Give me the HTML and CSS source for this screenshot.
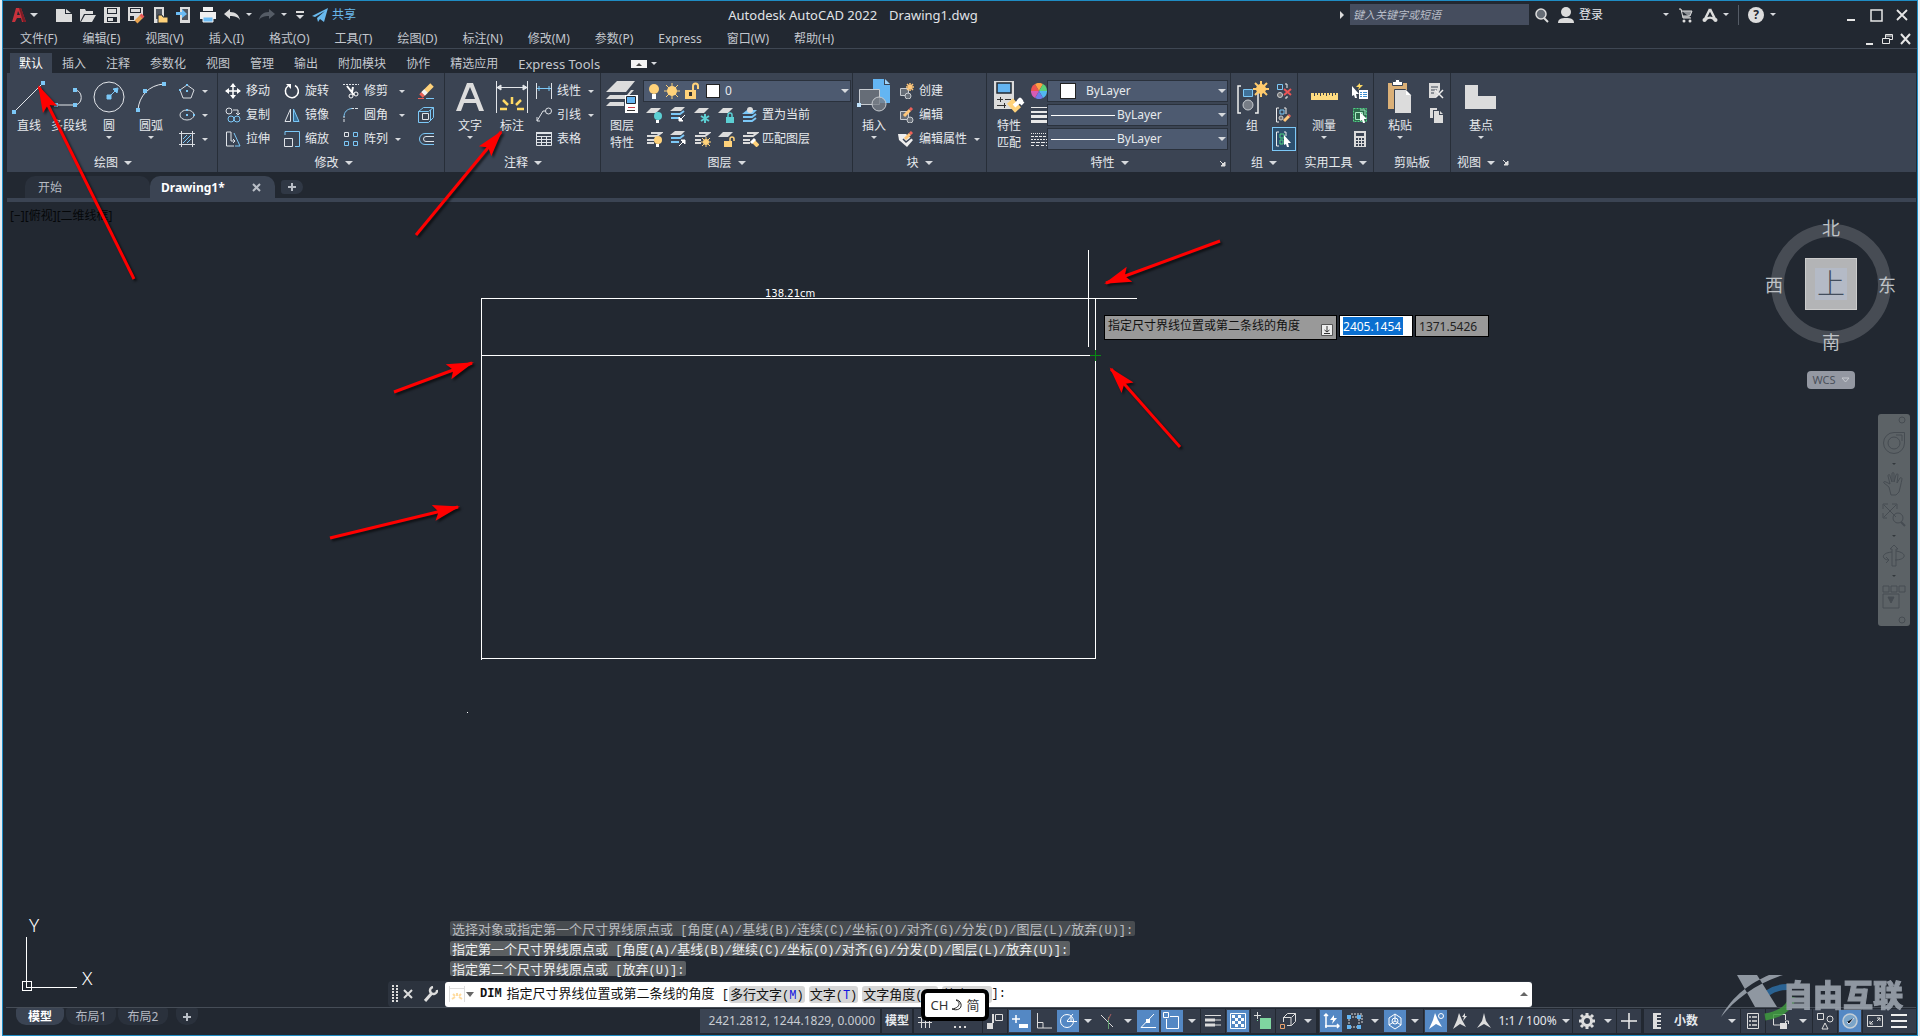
FILE: index.html
```html
<!DOCTYPE html>
<html lang="zh-CN">
<head>
<meta charset="utf-8">
<title>Autodesk AutoCAD 2022 - Drawing1.dwg</title>
<link rel="stylesheet" href="styles.css">
</head>
<body>
<div class="app">
  <header class="titlebar">
    <div class="quick">
      <button class="logo" aria-label="AutoCAD"><svg width="14" height="16" viewBox="0 0 14 16"><path fill="#c8323c" fill-rule="evenodd" d="M4 1h5l5 14h-4l-1-4H5l-2 4H0zM6 4l-1 4h3z"/><path fill="#7d1c26" d="M9 1l5 14h-3L7 1z"/></svg></button>
      <span class="caret wide"></span>
      <button class="q" aria-label="新建"><svg width="18" height="18"><path fill="#dcdcdc" d="M1 3h9v5h7v8H1z"/><path fill="#dcdcdc" d="M11 3l5 4h-5z"/></svg></button>
      <button class="q" aria-label="打开"><svg width="18" height="18"><path fill="#dcdcdc" d="M1 16V3h5l1 2h7v3H5zM6 9h11l-4 7H2z"/></svg></button>
      <button class="q" aria-label="保存"><svg width="18" height="18"><path fill="#dcdcdc" fill-rule="evenodd" d="M1 1h16v16H1zM4 2v6h10V2zM4 11v5h10v-5z"/><path fill="#dcdcdc" d="M5 3h8v4H5zM5 12h5v3H5z"/></svg></button>
      <button class="q" aria-label="另存为"><svg width="18" height="18"><path fill="#dcdcdc" fill-rule="evenodd" d="M1 1h15v8l-6 6H1zM3 2v5h11V2zM3 10v4h4v-4z"/><path fill="#dcdcdc" d="M4 3h9v3H4z"/><path stroke="#e7a24f" stroke-width="4" d="M9 16l6-6"/><path stroke="#e95959" stroke-width="4" d="M14 11l2-2"/></svg></button>
      <button class="q" aria-label="从移动设备打开"><svg width="18" height="18"><path fill="#dcdcdc" d="M3 1h10v16H3z"/><path fill="#50565f" d="M5 3h6v10H5z"/><path fill="#ffd27a" stroke="#222831" d="M7 17v-8h4l1 2h5v6z"/></svg></button>
      <button class="q" aria-label="保存到移动设备"><svg width="18" height="18"><path fill="#dcdcdc" d="M5 1h10v16H5z"/><path fill="#50565f" d="M7 3h6v11H7z"/><path fill="#6bbcf5" d="M1 6h6V3l5 5-5 4V9H1z"/></svg></button>
      <button class="q" aria-label="打印"><svg width="18" height="18"><path fill="#f0f0f0" d="M4 1h10v4H4zM1 6h16v7H1z"/><path fill="#6bbcf5" stroke="#f0f0f0" d="M4 11h10v5H4z"/></svg></button>
      <button class="q" aria-label="放弃"><svg width="18" height="18"><path fill="#dcdcdc" d="M1 8l6-5v3c6 0 9 3 10 8-2-3-5-4-10-4v3z"/></svg></button>
      <span class="caret tight"></span>
      <button class="q r" aria-label="重做"><svg width="18" height="18"><path fill="#555c66" d="M17 8l-6-5v3C5 6 2 9 1 14c2-3 5-4 10-4v3z"/></svg></button>
      <span class="caret tight"></span>
      <button class="custom" aria-label="自定义"><i></i><span class="caret wide"></span></button>
      <a class="share" href="#"><svg width="16" height="16"><path fill="#69b9ee" d="M0 9L16 1 12 15 8 12 6 15 5 11 13 4 3 10z"/></svg>共享</a>
    </div>
    <div class="apptitle"><span>Autodesk AutoCAD 2022</span><span>Drawing1.dwg</span></div>
    <div class="account">
      <svg width="6" height="10"><path fill="#ddd" d="M1 1l4 4-4 4z"/></svg>
      <input class="search" type="text" placeholder="键入关键字或短语" aria-label="搜索">
      <button class="mag" aria-label="查找"><svg width="16" height="16"><circle cx="7" cy="7" r="5" fill="#666d76" stroke="#ddd" stroke-width="1.5"/><path stroke="#ddd" stroke-width="2" d="M10 11l4 4"/></svg></button>
      <button class="login"><svg width="16" height="18"><circle cx="8" cy="6" r="5" fill="#dcdcdc"/><path fill="#dcdcdc" d="M0 17c0-4 3-5 8-5s8 1 8 5z"/></svg>登录</button>
      <span class="caret"></span>
      <button class="cart" aria-label="购物车"><svg width="16" height="16"><path d="M1 2h2l2 9h8M3 4h11l-2 5H5" stroke="#dcdcdc" fill="#8b8f94"/><circle cx="6" cy="14" r="1.5" fill="#ddd"/><circle cx="12" cy="14" r="1.5" fill="#ddd"/></svg></button>
      <button class="apps" aria-label="应用"><svg width="16" height="16"><path d="M8 2L2.500 13M8 2l5.500 11M3 13c3-3 7-3 10 0" fill="none" stroke="#dcdcdc" stroke-width="2.5"/><circle cx="2.500" cy="13" r="2" fill="#dcdcdc"/><circle cx="13.500" cy="13" r="2" fill="#dcdcdc"/></svg></button>
      <span class="caret"></span>
      <i class="vline"></i>
      <button class="help" aria-label="帮助">?</button>
      <span class="caret"></span>
      <div class="win">
        <button aria-label="最小化"><svg width="12" height="14"><path stroke="#e6e6e6" stroke-width="2" d="M2 12h8"/></svg></button>
        <button aria-label="最大化"><svg width="14" height="14"><path stroke="#e6e6e6" fill="none" stroke-width="1.5" d="M2 2h11v11H2z"/></svg></button>
        <button aria-label="关闭"><svg width="14" height="14"><path stroke="#e6e6e6" stroke-width="1.8" d="M2 2l10 10M12 2L2 12"/></svg></button>
      </div>
    </div>
  </header>

  <nav class="menubar">
    <button>文件(F)</button><button>编辑(E)</button><button>视图(V)</button><button>插入(I)</button><button>格式(O)</button><button>工具(T)</button><button>绘图(D)</button><button>标注(N)</button><button>修改(M)</button><button>参数(P)</button><button>Express</button><button>窗口(W)</button><button>帮助(H)</button>
    <div class="docwin">
      <button aria-label="最小化图形"><svg width="12" height="14"><path stroke="#e6e6e6" stroke-width="2" d="M3 12h7"/></svg></button>
      <button aria-label="还原图形"><svg width="12" height="12"><path stroke="#e6e6e6" fill="none" d="M1.500 5.500h7v5h-7zM4.500 5V1.500h7v5H9M4 3h7"/></svg></button>
      <button aria-label="关闭图形"><svg width="12" height="12"><path stroke="#e6e6e6" stroke-width="2" d="M2 1l9 10M11 1L2 11"/></svg></button>
    </div>
  </nav>

  <nav class="tabs">
    <button class="on">默认</button><button>插入</button><button>注释</button><button>参数化</button><button>视图</button><button>管理</button><button>输出</button><button>附加模块</button><button>协作</button><button>精选应用</button><button class="lat">Express Tools</button>
    <button class="collapse" aria-label="最小化功能区"><i></i></button><span class="caret"></span>
  </nav>

  <div class="ribbon">
    <section class="panel draw">
      <div class="body">
        <button class="big w40"><svg width="34" height="36"><path stroke="#e3e6ea" d="M2 33L31 4"/><path fill="#7cc8f7" d="M0 31h4v4H0zM29 2h4v4h-4z"/></svg>直线</button>
        <button class="big w40"><svg width="34" height="36"><path stroke="#e3e6ea" fill="none" d="M4 26h20a8 8 0 0 0 0-15"/><path fill="#7cc8f7" d="M2 24h4v4H2zM21 24h4v4h-4zM21 9h4v4h-4z"/></svg>多段线</button>
        <button class="big w40"><svg width="34" height="36"><circle cx="17" cy="18" r="15" fill="none" stroke="#e3e6ea"/><path stroke="#7cc8f7" fill="#7cc8f7" d="M17 18l8-8M26 9l-5 1 4 4zM15 16h4v4h-4z"/></svg>圆<span class="caret"></span></button>
        <button class="big w44"><svg width="34" height="36"><path stroke="#e3e6ea" fill="none" d="M4 31C5 17 15 6 30 5"/><path fill="#7cc8f7" d="M2 29h4v4H2zM9 10h4v4H9zM28 3h4v4h-4z"/></svg>圆弧<span class="caret"></span></button>
        <div class="col icons">
          <button class="row" aria-label="多边形"><svg width="16" height="16"><path stroke="#d9dde2" fill="none" d="M8 2l7 5-3 8H4L1 7z"/><path fill="#7cc8f7" d="M7 7h2v2H7zM7 1h2v2H7zM0 6h2v2H0z"/></svg><span class="caret"></span></button>
          <button class="row" aria-label="椭圆"><svg width="16" height="16"><ellipse cx="8" cy="8" rx="7" ry="5" stroke="#d9dde2" fill="none"/><path fill="#7cc8f7" d="M7 7h2v2H7zM14 7h2v2h-2zM7 2h2v2H7z"/></svg><span class="caret"></span></button>
          <button class="row" aria-label="图案填充"><svg width="16" height="16"><path stroke="#d9dde2" fill="none" d="M2.500 0v16M13.500 0v16M0 2.500h16M0 13.500h16"/><path stroke="#7cc8f7" d="M4 8l4-4M4 12l8-8M8 12l4-4"/></svg><span class="caret"></span></button>
        </div>
      </div>
      <h2>绘图<span class="caret wide"></span></h2>
    </section>

    <section class="panel modify">
      <div class="body">
        <div class="col w59">
          <button class="row"><svg width="16" height="16"><path stroke="#fff" stroke-width="1.500" d="M8 1v14M1 8h14"/><path fill="#fff" d="M8 0l3 4H5zM8 16l3-4H5zM0 8l4-3v6zM16 8l-4-3v6z"/></svg>移动</button>
          <button class="row"><svg width="16" height="16"><g fill="none" stroke="#dfe3e8"><circle cx="4" cy="4" r="3"/><path d="M8 3h5v5M11 6l2 2 2-2"/></g><g fill="none" stroke="#7cc8f7"><circle cx="6" cy="12" r="3"/><circle cx="12" cy="12" r="3"/></g></svg>复制</button>
          <button class="row"><svg width="16" height="16"><path stroke="#dfe3e8" fill="none" d="M9 15H1.500V1H6v9h4M8 8l2 2-2 2"/><path stroke="#7cc8f7" fill="none" d="M9 2l6 13h-5"/></svg>拉伸</button>
        </div>
        <div class="col w59">
          <button class="row"><svg width="16" height="16"><path stroke="#fff" stroke-width="1.500" fill="none" d="M11 2.500A6.500 6.500 0 1 1 4 3"/><path fill="#fff" d="M2 1h5v5z"/></svg>旋转</button>
          <button class="row"><svg width="16" height="16"><path stroke="#dfe3e8" fill="none" d="M6.500 2v12.500H1z"/><path stroke="#7cc8f7" fill="#38729c" d="M9.500 2v12.500H15z"/></svg>镜像</button>
          <button class="row"><svg width="16" height="16"><path stroke="#7cc8f7" fill="none" d="M1 4V.5h14.500v15H11"/><path stroke="#dfe3e8" fill="none" d="M.5 7.500h8v8h-8z"/></svg>缩放</button>
        </div>
        <div class="col w75">
          <button class="row"><svg width="16" height="16"><path stroke="#dfe3e8" stroke-dasharray="2 1" d="M0 1.500h16"/><path stroke="#fff" stroke-width="2" d="M4 3l7 9M10 4L9 9"/><g fill="none" stroke="#fff"><circle cx="8" cy="13" r="2"/><circle cx="13" cy="11" r="2"/></g></svg>修剪<span class="caret far"></span></button>
          <button class="row"><svg width="16" height="16"><path stroke="#dfe3e8" stroke-dasharray="3 1" fill="none" d="M1 15V9M8 1.500h8"/><path stroke="#7cc8f7" fill="none" d="M1 10c0-5 3-8 8-8.500"/></svg>圆角<span class="caret far"></span></button>
          <button class="row"><svg width="16" height="16"><path stroke="#dfe3e8" fill="none" d="M1.500 1.500h4v4h-4z"/><path stroke="#7cc8f7" fill="none" d="M10.500 1.500h4v4h-4zM1.500 10.500h4v4h-4zM10.500 10.500h4v4h-4z"/></svg>阵列<span class="caret"></span></button>
        </div>
        <div class="col">
          <button class="row" aria-label="删除"><svg width="16" height="16"><path stroke="#ffd27a" stroke-width="5" d="M5 11l9-9"/><path stroke="#f3f3f3" stroke-width="5" d="M5 11l3-3"/><path stroke="#ee6058" stroke-width="5" d="M3 13l2-2"/><path stroke="#7cc8f7" d="M8 15.500h8"/><path stroke="#ee6058" d="M0 15.500h6"/></svg></button>
          <button class="row" aria-label="分解"><svg width="16" height="16"><path stroke="#dfe3e8" fill="none" d="M4.500 6.500h6v6h-6z"/><path stroke="#7cc8f7" fill="none" d="M.5 4.500v11h10M.5 4.500h10M.5 4.500l5-4h10v10l-5 5M10.500 4.500l5-4M12.500 3v10"/></svg></button>
          <button class="row" aria-label="偏移"><svg width="16" height="16"><path stroke="#7cc8f7" fill="none" d="M16 2.500H7a5.500 5.500 0 0 0 0 11h9"/><path stroke="#dfe3e8" fill="none" d="M16 5.500H8a2.500 2.500 0 0 0 0 5h8"/></svg></button>
        </div>
      </div>
      <h2>修改<span class="caret wide"></span></h2>
    </section>

    <section class="panel annot">
      <div class="body">
        <button class="big w48"><svg width="34" height="36"><path fill="#dcdcdc" fill-rule="evenodd" d="M14 4h6l11 28h-5l-3-8H11l-3 8H3zM17 8l-5 12h10z"/></svg>文字<span class="caret"></span></button>
        <button class="big w36"><svg width="34" height="36"><path stroke="#e3e6ea" fill="#e3e6ea" d="M1.500 2v32M32.500 2v32M2 8.500h30M6 6v5l-4-2.500zM28 6v5l4-2.500z"/><path stroke="#ffd964" stroke-width="2.500" d="M5 30h7M8 21l5 5M17 18v7M26 21l-5 5M29 30h-7"/></svg>标注</button>
        <div class="col w66 gap4">
          <button class="row"><svg width="16" height="16"><path stroke="#dfe3e8" d="M.5 0v16M15.500 0v16"/><path stroke="#7cc8f7" d="M1 5.500h14M3 3v5M13 3v5"/></svg>线性<span class="caret"></span></button>
          <button class="row"><svg width="16" height="16"><circle cx="12.500" cy="4" r="3" fill="none" stroke="#dfe3e8"/><path stroke="#dfe3e8" fill="none" d="M9.500 4H7L1 14M1 10v4h3"/></svg>引线<span class="caret"></span></button>
          <button class="row"><svg width="16" height="16"><path stroke="#dfe3e8" fill="none" d="M.5 1.500h15v13H.5zM0 5.500h16M0 8.500h16M0 11.500h16M5.500 5v9M10.500 5v9"/><path stroke="#dfe3e8" stroke-width="2" d="M0 2h16"/></svg>表格</button>
        </div>
      </div>
      <h2>注释<span class="caret wide"></span></h2>
    </section>

    <section class="panel layer">
      <div class="body">
        <button class="big w42"><svg width="34" height="36"><g fill="#dcdcdc"><path d="M12 2h18l-9 11H1z"/><path d="M5 16h17l4-5h3l-8 9H1zM5 23h14v4H1z"/></g><path fill="#fff" d="M20 16h13v18H20z"/><path fill="#64b5f2" stroke="#222831" d="M21.500 17.500h9v7h-9z"/><path stroke="#d23c4b" d="M23 28.500h7"/><path stroke="#333" d="M22 31.500h8"/></svg>图层<br>特性</button>
        <div class="col layers">
          <button class="combo" aria-label="图层列表"><svg width="68" height="18"><circle cx="7" cy="7" r="5" fill="#ffd27a"/><path fill="#fff" d="M5 12h4v5H5z"/><g transform="translate(25 9)"><circle r="5" fill="#ffd27a"/><path stroke="#ffd27a" d="M0-8V8M-8 0H8M-6-6L6 6M-6 6L6-6"/></g><path fill="#ffd27a" d="M38 8h11v9H38z"/><path fill="none" stroke="#ffd27a" stroke-width="2" d="M46 8V4a2.500 2.500 0 0 1 5 0v3"/><path fill="#333" d="M42 10h3v4h-3z"/></svg><i class="swatch"></i>0<span class="caret wide"></span></button>
          <div class="lrow">
            <button aria-label="关"><svg width="18" height="16"><path fill="#dcdcdc" d="M6 1h10l-5 5H1z"/><circle cx="13" cy="9" r="4" fill="#5ccfd3"/><path fill="#fff" d="M11 13h3v3h-3z"/></svg></button>
            <button aria-label="隔离"><svg width="18" height="16"><path fill="#dcdcdc" d="M6 0h10l-4 4H1z"/><path fill="none" stroke="#7cc8f7" stroke-width="2" d="M2 7h9l4-3M2 11h8"/><path stroke="#fff" fill="#fff" d="M16 8l-5 5M10 10v4h4z"/></svg></button>
            <button aria-label="冻结"><svg width="18" height="16"><path fill="#dcdcdc" d="M6 1h10l-5 5H1z"/><path stroke="#5ccfd3" stroke-width="2" d="M12 7v9M8 9l8 5M8 14l8-5"/></svg></button>
            <button aria-label="锁定"><svg width="18" height="16"><path fill="#dcdcdc" d="M6 1h10l-5 5H1z"/><path fill="#5ccfd3" d="M9 10h8v6H9z"/><path stroke="#5ccfd3" stroke-width="1.500" fill="none" d="M11 10V8a2 2 0 0 1 4 0v2"/></svg></button>
            <button aria-label="置为当前图层"><svg width="18" height="16"><path fill="#7cc8f7" d="M6 3h10l-4 4H1z"/><path stroke="#7cc8f7" fill="none" stroke-width="2" d="M2 10h9l4-3M2 14h9l4-3"/><circle cx="9" cy="3" r="3" fill="#dcdcdc"/></svg></button>
            <span>置为当前</span>
          </div>
          <div class="lrow">
            <button aria-label="打开所有图层"><svg width="18" height="16"><path stroke="#dcdcdc" stroke-width="2" fill="none" d="M6 2h10l-4 3H2M2 9h8M2 12h7"/><circle cx="13" cy="9" r="4" fill="#ffd27a"/><path fill="#fff" d="M11 13h3v3h-3z"/></svg></button>
            <button aria-label="取消隔离"><svg width="18" height="16"><path fill="#dcdcdc" d="M6 0h10l-4 4H1z"/><path fill="none" stroke="#7cc8f7" stroke-width="2" d="M2 7h9l4-3M2 11h8"/><path stroke="#fff" fill="#fff" d="M10 15l5-5M12 9h4v4z"/></svg></button>
            <button aria-label="解冻"><svg width="18" height="16"><path stroke="#dcdcdc" stroke-width="2" fill="none" d="M6 2h10l-4 3H2M2 9h6M2 12h6"/><circle cx="13" cy="11" r="3" fill="#ffd27a"/><path stroke="#ffd27a" d="M13 6v10M8 11h10M9 7l8 8M9 15l8-8"/></svg></button>
            <button aria-label="解锁"><svg width="18" height="16"><path fill="#dcdcdc" d="M6 1h10l-5 5H1z"/><path fill="#ffd27a" d="M7 10h8v6H7z"/><path stroke="#ffd27a" stroke-width="1.500" fill="none" d="M13 10V8a2 2 0 0 1 4 0v2"/></svg></button>
            <button aria-label="匹配"><svg width="18" height="16"><path stroke="#dcdcdc" stroke-width="2" fill="none" d="M6 2h10l-4 3H2M2 9h7M2 12h7"/><path stroke="#ffd27a" stroke-width="4" d="M12 10l5 5"/><path stroke="#fff" stroke-width="3" d="M10 12l4-4"/></svg></button>
            <span>匹配图层</span>
          </div>
        </div>
      </div>
      <h2>图层<span class="caret wide"></span></h2>
    </section>

    <section class="panel block">
      <div class="body">
        <button class="big w42"><svg width="34" height="36"><path fill="#64b5f2" d="M16 0h11v6h6v18H16z"/><path fill="#9ed3fa" d="M28 0l5 5h-5z"/><path fill="#666d77" stroke="#c7cbd0" d="M2.500 10.500h20v15h-20z"/><circle cx="22" cy="25" r="7" fill="#777d86" fill-opacity=".8" stroke="#c7cbd0"/><path fill="#bfe2fc" d="M0 24h4v4H0z"/></svg>插入<span class="caret"></span></button>
        <div class="col">
          <button class="row"><svg width="16" height="16"><path stroke="#c7cbd0" fill="#666d77" d="M2.500 5.500h8v7h-8z"/><circle cx="10" cy="13" r="3" fill="#666d77" stroke="#c7cbd0"/><path stroke="#ffc77a" stroke-width="1.500" d="M12 0v8M8 4h8M9 1l6 6M9 7l6-6"/></svg>创建</button>
          <button class="row"><svg width="16" height="16"><path stroke="#c7cbd0" fill="#666d77" d="M2.500 4.500h8v8h-8z"/><circle cx="12" cy="13" r="3" fill="#666d77" stroke="#c7cbd0"/><path stroke="#ffc77a" stroke-width="3" d="M6 9l6-6"/><path stroke="#ee6058" stroke-width="3" d="M12 3l2-2"/></svg>编辑</button>
          <button class="row"><svg width="16" height="16"><path fill="#eee" d="M0 3h8l7 6-6 7-8-7z"/><path stroke="#3b4453" stroke-width="1.500" fill="none" d="M5 8l3 3 5-4"/><path stroke="#ffc77a" stroke-width="3" d="M7 8l5-5"/><path stroke="#ee6058" stroke-width="3" d="M12 3l2-2"/></svg>编辑属性<span class="caret"></span></button>
        </div>
      </div>
      <h2>块<span class="caret wide"></span></h2>
    </section>

    <section class="panel props">
      <div class="body">
        <button class="big w40"><svg width="34" height="36"><path fill="#dcdcdc" d="M2 2h20v28H2z"/><path fill="#64b5f2" stroke="#222831" stroke-width="1.500" d="M5 4h14v10H5z"/><path stroke="#333" d="M5 20.500h6M13 20.500h6M8.500 18v5M5 26.500h9M12.500 24v5"/><path stroke="#ffd27a" stroke-width="8" d="M18 22l8 9"/><path stroke="#fff" stroke-width="4" d="M22 27l8-7M26 20l5 5"/></svg>特性<br>匹配</button>
        <div class="col picons">
          <button class="row" aria-label="颜色"><svg width="16" height="16" viewBox="-8 -8 16 16"><path fill="#ef5350" d="M0 0L-8 0A8 8 0 0 1-4-7z"/><path fill="#ff9f43" d="M0 0L-4-7A8 8 0 0 1 4-7z"/><path fill="#5bd078" d="M0 0L4-7A8 8 0 0 1 8 0z"/><path fill="#52b7f0" d="M0 0L8 0A8 8 0 0 1 4 7z"/><path fill="#6f7be8" d="M0 0L4 7A8 8 0 0 1-4 7z"/><path fill="#d75bb5" d="M0 0L-4 7A8 8 0 0 1-8 0z"/></svg></button>
          <button class="row" aria-label="线宽"><svg width="16" height="16"><path fill="#e8e8e8" d="M0 0h16v1H0zM0 4h16v2H0zM0 8h16v3H0zM0 13h16v3H0z"/></svg></button>
          <button class="row" aria-label="线型"><svg width="16" height="16"><g stroke="#e8e8e8"><path stroke-dasharray="1 1" d="M0 2.500h16"/><path stroke-dasharray="3 1" d="M0 5.500h16"/><path stroke-dasharray="2 1" d="M0 8.500h16"/><path stroke-dasharray="4 1" d="M0 11.500h16"/><path d="M0 14.500h16" stroke-dasharray="3 2"/></g></svg></button>
        </div>
        <div class="col pcombos">
          <button class="combo"><i class="swatch"></i>ByLayer<span class="caret wide"></span></button>
          <button class="combo"><i class="stroke"></i>ByLayer<span class="caret wide"></span></button>
          <button class="combo"><i class="stroke"></i>ByLayer<span class="caret wide"></span></button>
        </div>
      </div>
      <h2>特性<span class="caret wide"></span><svg class="launch" width="6" height="6"><path stroke="#ddd" fill="#ddd" d="M0 0l4 4M5 1v4H1z"/></svg></h2>
    </section>

    <section class="panel group">
      <div class="body">
        <button class="big w42"><svg width="34" height="36"><path stroke="#eee" stroke-width="1.500" fill="none" d="M6 7H3v27h3M20 34h3V14"/><path fill="#3f7199" stroke="#7cc8f7" d="M8.500 10.500h9v7h-9z"/><circle cx="13" cy="26" r="5" fill="#777d86" stroke="#c7cbd0"/><g transform="translate(26 10)"><circle r="5" fill="#ffcb6d"/><path stroke="#ffcb6d" stroke-width="2" d="M0-8V8M-8 0H8M-6-6L6 6M-6 6L6-6"/></g></svg>组</button>
        <div class="col">
          <button class="row" aria-label="解除编组"><svg width="16" height="16"><path stroke="#7cc8f7" fill="none" d="M1.500 1.500h5v5h-5z"/><circle cx="4" cy="12" r="2.500" fill="#777" stroke="#ccc"/><path stroke="#eee" fill="none" d="M9 1h2v4M9 15h2v-2"/><path stroke="#ee5555" stroke-width="2" d="M8 6l7 6M15 6l-7 6"/></svg></button>
          <button class="row" aria-label="组编辑"><svg width="16" height="16"><path stroke="#eee" fill="none" d="M3 1H.5v14H3M8 1h2v6"/><path stroke="#7cc8f7" fill="none" d="M4 3h4v4H4z"/><circle cx="5" cy="11" r="2" fill="#777" stroke="#ccc"/><path stroke="#ffc77a" stroke-width="3" d="M8 14l5-5"/><path stroke="#ee6058" stroke-width="3" d="M13 9l1-1"/></svg></button>
          <button class="row picked" aria-label="启用组选择"><svg width="16" height="16"><path stroke="#eee" fill="none" d="M3 1H.5v14H3M8 1h2v4"/><path stroke="#4fd184" fill="none" d="M4 3h4v4H4zM4 9h3v4H4z"/><path fill="#fff" d="M8 4l7 8-3 0 1 4-2 0-1-3-2 1z"/></svg></button>
        </div>
      </div>
      <h2>组<span class="caret wide"></span></h2>
    </section>

    <section class="panel util">
      <div class="body">
        <button class="big w52"><svg width="34" height="36"><path fill="#ffdc80" d="M4 14h27v7H4z"/><path stroke="#3b4453" d="M7.500 14v3M10.500 14v2M13.500 14v3M16.500 14v2M19.500 14v3M22.500 14v2M25.500 14v3M28.500 14v2"/></svg>测量<span class="caret"></span></button>
        <div class="col">
          <button class="row" aria-label="快速选择"><svg width="16" height="16"><path fill="#fff" d="M0 3l7 8H4l1 4H3l-1-3-2 1z"/><path fill="#ffd964" d="M8 0L4 4h3L6 7l5-5H8z"/><path fill="#fff" d="M7 7h9v9H7z"/><path stroke="#3f8fd0" stroke-dasharray="2 1 5 1" d="M8 9.500h7M8 11.500h7M8 13.500h7"/></svg></button>
          <button class="row" aria-label="全部选择"><svg width="16" height="16"><path stroke="#4fd184" stroke-dasharray="2 1" fill="#2e6b4c" d="M1.500 1.500h13v13h-13z"/><path stroke="#a8ecc4" fill="none" d="M3.500 5.500h7v7h-7zM8 3h5v5"/><path fill="#fff" d="M8 5l7 7h-3l1 4h-2l-1-3-2 1z"/></svg></button>
          <button class="row" aria-label="快速计算器"><svg width="16" height="16"><path fill="#dcdcdc" d="M2 0h12v16H2z"/><path stroke="#3b4453" stroke-width="2" stroke-dasharray="2 1" d="M4 8h8M4 11h8M4 14h8"/><path fill="#3b4453" d="M4 2h8v3H4z"/></svg></button>
        </div>
      </div>
      <h2>实用工具<span class="caret wide"></span></h2>
    </section>

    <section class="panel clip">
      <div class="body">
        <button class="big w52"><svg width="34" height="36"><path fill="#dbb077" d="M5 4h19v26H5z"/><path fill="#fff" stroke="#3b4453" d="M9.500 6.500v-4h3v-2h4v2h3v4z"/><path fill="#dcdcdc" stroke="#3b4453" d="M11.500 10.500h11l6 6v18h-17z"/><path fill="#fff" d="M23 11l5 5h-5z"/></svg>粘贴<span class="caret"></span></button>
        <div class="col">
          <button class="row" aria-label="剪切"><svg width="16" height="16"><path fill="#dcdcdc" d="M1 0h11v7L8 15H1z"/><path stroke="#3b4453" d="M3 4h7M3 7h6M3 10h3"/><path stroke="#eee" stroke-width="1.500" d="M7 7l8 8M15 7l-7 7"/></svg></button>
          <button class="row" aria-label="复制剪裁"><svg width="16" height="16"><path fill="#dcdcdc" d="M2 1h7v2H5v8H2z"/><path fill="#dcdcdc" d="M6 4h5v4h4v8H6zM12 4l3 3h-3z"/></svg></button>
        </div>
      </div>
      <h2>剪贴板</h2>
    </section>

    <section class="panel view">
      <div class="body">
        <button class="big w60"><svg width="34" height="36"><path fill="#dcdcdc" d="M1 6h13v11h18v13H1z"/></svg>基点<span class="caret"></span></button>
      </div>
      <h2>视图<span class="caret wide"></span><svg class="inl" width="6" height="6"><path stroke="#ddd" fill="#ddd" d="M0 0l4 4M5 1v4H1z"/></svg></h2>
    </section>
  </div>

  <nav class="files">
    <button class="ftab">开始</button>
    <div class="ftab active"><button>Drawing1*</button><button aria-label="关闭 Drawing1"><svg width="10" height="10"><path stroke="#b9bec6" stroke-width="2" d="M1 1l7 7M8 1L1 8"/></svg></button></div>
    <button class="fplus" aria-label="新图形"><svg width="10" height="10"><path stroke="#b9bec6" stroke-width="2" d="M5 1v8M1 5h8"/></svg></button>
  </nav>

  <main class="canvas">
    <button class="vplabel">[−][俯视][二维线框]</button>
    <svg class="drawing" width="1500" height="600" shape-rendering="crispEdges">
      <g stroke="#fff" fill="none">
        <path d="M478.500 457.500V96.500H1134M1092.500 97v360M478 153.500h615M478 456.500h615"/>
        <path d="M1085.500 48v97M464 510.500h1"/>
      </g>
      <path stroke="#0a8a14" d="M1087 153.500h11M1092.500 148v11"/>
      <text class="dim" x="762" y="95">138.21cm</text>
    </svg>

    <div class="prompt">
      <label class="tip" for="px">指定尺寸界线位置或第二条线的角度<svg width="12" height="12"><path fill="#eee" stroke="#555" d="M.5.500h11v11H.5z"/><path stroke="#333" fill="none" d="M6 2v6M3.500 6L6 8l2.500-2M3 9.500h6"/></svg></label>
      <div class="coord active"><input id="px" value="2405.1454"></div>
      <div class="coord"><input value="1371.5426" aria-label="Y 坐标"></div>
    </div>

    <div class="cube">
      <div class="ring"><button class="face"><span>上</span></button></div>
      <span class="n">北</span><span class="w">西</span><span class="e">东</span><span class="s">南</span>
      <button class="wcs">WCS<svg width="9" height="6"><path fill="none" stroke="#c6c9cf" d="M1 1h7L4.500 5z"/></svg></button>
    </div>

    <div class="navbar">
      <svg class="dot" width="8" height="8"><circle cx="4" cy="4" r="3" fill="none" stroke="#464c52"/></svg>
      <button aria-label="导航控制盘"><svg width="24" height="24" fill="none" stroke="#464c52"><path d="M12 1.500h10.500V12A10.500 10.500 0 1 1 12 1.500z"/><circle cx="12" cy="12" r="6"/><path d="M14 4h6v6"/></svg></button>
      <i></i>
      <button aria-label="平移"><svg width="24" height="24" fill="none" stroke="#464c52"><path d="M7 15L2 11c-1-1 0-2 2-1l4 2-2-8c0-2 2-2 2 0l2 6V2c0-2 2-2 2 0v8l2-7c1-2 2-1 2 0l-1 8 3-5c1-1 2 0 2 1-1 5-2 9-3 13l-3 3H9z"/></svg></button>
      <button aria-label="缩放"><svg width="24" height="24" fill="none" stroke="#464c52"><path d="M2 2l12 12M14 2L2 14M1 6V1h5M10 1h5v5M1 10v5h4"/><circle cx="16" cy="15" r="5"/><path stroke-width="2" d="M19 19l4 4"/></svg></button>
      <i></i>
      <button aria-label="动态观察"><svg width="24" height="24" fill="none" stroke="#464c52"><path d="M10 22V5H8l4-4 4 4h-2v17zM14 7c12 2 10 9-1 9M10 8C-2 9 0 16 7 16M4 13l3 3-3 3"/></svg></button>
      <i></i>
      <button aria-label="ShowMotion"><svg width="24" height="24" fill="none" stroke="#464c52"><path d="M1 1h6v6H1zM9 1h6v6H9zM17 1h6v6h-6zM1 9h16v14H1z"/><path fill="#464c52" d="M6 12h6l-3 6z"/></svg></button>
      <svg class="dot" width="8" height="8"><circle cx="4" cy="4" r="3" fill="none" stroke="#464c52"/></svg>
    </div>

    <svg class="ucs" width="90" height="84">
      <g fill="none" stroke="#fff" stroke-width="1" shape-rendering="crispEdges"><path d="M7.500 29v50H58M3.500 73.500h9v9h-9z"/></g>
      <text x="10" y="24">Y</text><text x="63" y="77">X</text>
    </svg>

    <div class="command">
      <div class="hist">
        <p class="old">选择对象或指定第一个尺寸界线原点或<b> [</b>角度<b>(A)/</b>基线<b>(B)/</b>连续<b>(C)/</b>坐标<b>(O)/</b>对齐<b>(G)/</b>分发<b>(D)/</b>图层<b>(L)/</b>放弃<b>(U)]:</b></p>
        <p>指定第一个尺寸界线原点或<b> [</b>角度<b>(A)/</b>基线<b>(B)/</b>继续<b>(C)/</b>坐标<b>(O)/</b>对齐<b>(G)/</b>分发<b>(D)/</b>图层<b>(L)/</b>放弃<b>(U)]:</b></p>
        <p>指定第二个尺寸界线原点或<b> [</b>放弃<b>(U)]:</b></p>
      </div>
      <div class="cmd">
        <svg width="6" height="18"><path stroke="#ddd" stroke-width="2" stroke-dasharray="2 1" d="M1 0v18M5 0v18"/></svg>
        <button class="x" aria-label="关闭命令行"><svg width="10" height="10"><path stroke="#ddd" stroke-width="2" d="M1 1l8 8M9 1L1 9"/></svg></button>
        <button class="wrench" aria-label="自定义"><svg width="14" height="16"><path stroke="#ddd" stroke-width="3" d="M1 15l7-8"/><path stroke="#ddd" stroke-width="2.500" fill="none" d="M13 4a3.500 3.500 0 1 1-4-3"/></svg></button>
        <div class="line">
          <svg width="16" height="16"><path stroke="#ddd" fill="none" d="M.5 0v16M15.500 0v16M0 2.500h16"/><path stroke="#ffdca0" stroke-width="2" d="M3 13l3-2M8 7v3M13 13l-3-2M4 8l2 2M12 8l-2 2"/></svg>
          <span class="caret dark"></span>
          <strong>DIM</strong><span class="ask">指定尺寸界线位置或第二条线的角度<b> [</b></span>
          <button>多行文字<b>(<em>M</em>)</b></button><button>文字<b>(<em>T</em>)</b></button><button>文字角度<b>(<em>A</em>)</b></button><button>放弃<b>(<em>U</em>)</b></button><b>]:</b>
          <span class="up"></span>
        </div>
      </div>
    </div>
  </main>

  <footer class="status">
    <div class="layouts"><button class="on">模型</button><button>布局1</button><button>布局2</button><button class="add" aria-label="新建布局"><svg width="10" height="10"><path stroke="#b9bec6" stroke-width="2" d="M5 1v8M1 5h8"/></svg></button></div>
    <div class="tools">
      <button class="xyz">2421.2812, 1244.1829, 0.0000</button><button class="model">模型</button>
      <button class="grid" aria-label="栅格"><svg width="16" height="16"><path stroke="#ddd" d="M0 4.500h14M0 9.500h14M3.500 1v14M7.500 1v14M11.500 1v14"/></svg></button><button class="snap" aria-label="捕捉"><svg width="14" height="4"><path fill="#ddd" d="M1 1h2v2H1zM6 1h2v2H6zM11 1h2v2h-2z"/></svg></button><i></i>
      <button aria-label="推断约束"><svg width="18" height="18"><path fill="none" stroke="#ddd" d="M9.500 2.500h7v6h-7z"/><path fill="#ddd" d="M1 11h6v6H1zM6 2h2v9H6z"/></svg></button>
      <i></i>
      <button class="on" aria-label="动态输入"><svg width="18" height="18"><path stroke="#fff" stroke-width="1.500" d="M5 3v8M1 7h8"/><path fill="#fff" d="M8 12h9v4H8z"/></svg></button>
      <button aria-label="正交"><svg width="18" height="18"><path stroke="#ddd" fill="none" d="M2.500 1v15H17M3 10.500h5V16"/></svg></button>
      <button class="on" aria-label="极轴"><svg width="18" height="18"><circle cx="8" cy="9" r="6.500" fill="none" stroke="#fff"/><path stroke="#fff" d="M8 9l6-7M8 9.500h10M12 5v5"/></svg></button>
      <span class="caret wide"></span>
      <button aria-label="等轴测"><svg width="18" height="18"><path stroke="#ddd" d="M2 3l12 12"/><path stroke="#64a070" d="M9.500 5v12"/><path stroke="#a85e62" d="M12 2l-3 6"/></svg></button>
      <span class="caret wide"></span>
      <button class="on" aria-label="追踪"><svg width="18" height="18"><path stroke="#fff" fill="none" d="M15 2L2 15.500h15"/><path fill="#fff" d="M7 7h4v4H7z"/></svg></button>
      <button class="on" aria-label="对象捕捉"><svg width="18" height="18"><path stroke="#fff" fill="none" d="M3.500 7v9.500h12v-12H7M.5.500h5v5h-5z"/></svg></button>
      <span class="caret wide"></span><i></i>
      <button aria-label="线宽"><svg width="18" height="18"><path stroke="#ddd" d="M1 3.500h16"/><path stroke="#ddd" stroke-width="3" d="M1 8h10M1 13h10"/><path stroke="#ddd" d="M9 8h8M9 13h8"/></svg></button>
      <i></i>
      <button class="on" aria-label="透明度"><svg width="18" height="18"><path stroke="#fff" fill="none" d="M1.500 1.500h15v15h-15z"/><path fill="#fff" d="M3 3h3v3H3zM9 3h3v3H9zM6 6h3v3H6zM12 6h3v3h-3zM3 9h3v3H3zM9 9h3v3H9zM6 12h3v3H6zM12 12h3v3h-3z"/></svg></button>
      <i></i>
      <button aria-label="选择循环"><svg width="18" height="18"><path stroke="#ddd" d="M3.500 0v7M0 3.500h7"/><path fill="#7fd6a0" d="M6 6h11v11H6z"/><path stroke="#7fd6a0" d="M3.500 9v-1"/></svg></button>
      <i></i>
      <button aria-label="三维捕捉"><svg width="18" height="18"><path stroke="#ddd" fill="none" d="M4.500 10V5.500l4-4h8v8l-4 4H8M4 5.500h8v8M12.500 5.500l4-4"/><path stroke="#e8a16c" fill="none" d="M1.500 12.500h4v4h-4z"/></svg></button>
      <span class="caret wide"></span><i class="gap"></i>
      <button class="on" aria-label="动态UCS"><svg width="18" height="18"><path stroke="#fff" stroke-width="1.500" fill="none" d="M4 16V2M2 4l2-2 2 2M3 14h14M15 12l2 2-2 2"/><path fill="#fff" d="M12 3L8 8h3l-1 4 5-6h-3z"/></svg></button>
      <button aria-label="选择过滤"><svg width="18" height="18"><path stroke="#ddd" stroke-dasharray="2 1" fill="none" d="M3 5h10v10H3zM5 2h11v9"/><path fill="#64b5f2" d="M1 3h4v4H1zM11 3h4v4h-4zM1 13h4v4H1zM11 13h4v4h-4z"/></svg></button>
      <span class="caret wide"></span>
      <button class="on" aria-label="小控件"><svg width="18" height="18"><path stroke="#fff" fill="none" d="M9 2l6 4v7l-6 4-6-4V6zM9 9V2M9 9l6 4M9 9l-6 4"/><circle cx="9" cy="9" r="3" fill="none" stroke="#fff"/></svg></button>
      <span class="caret wide"></span><i></i>
      <button class="on" aria-label="注释可见性"><svg width="18" height="18"><path fill="#fff" d="M8 1l3 7 4 7-6-3-7 5 4-9z"/><circle cx="14" cy="4" r="2.500" fill="none" stroke="#fff"/></svg></button>
      <button aria-label="自动缩放"><svg width="18" height="18"><path fill="#ddd" d="M8 1l3 7 4 7-6-3-7 5 4-9zM14 1l-3 4h2l-1 4 4-5h-2z"/></svg></button>
      <button aria-label="注释比例"><svg width="18" height="18"><path fill="#ddd" d="M9 1l2 8 5 7-7-4-7 4 5-7z"/></svg></button>
      <button class="scale">1:1 / 100%<span class="caret wide"></span></button><i></i>
      <button class="gear" aria-label="工作空间"><svg width="18" height="18"><circle cx="9" cy="9" r="4.500" fill="none" stroke="#ddd" stroke-width="3"/><path stroke="#ddd" stroke-width="3" d="M9 1v3M9 14v3M1 9h3M14 9h3M3 3l2 2M13 13l2 2M3 15l2-2M13 5l2-2"/></svg><span class="caret wide"></span></button><i></i>
      <button aria-label="注释监视器"><svg width="18" height="18"><path stroke="#eee" stroke-width="1.500" d="M9 1v16M1 9h16"/></svg></button><i class="gap"></i>
      <button class="units"><svg width="10" height="18"><path fill="#ddd" d="M1 1h8v2H5v2h4v1H5v2h4v2H5v2h4v1H5v2h4v2H1z"/></svg>小数<span class="caret wide"></span></button><i></i>
      <button aria-label="快捷特性"><svg width="18" height="18"><path stroke="#ddd" fill="none" d="M3.500 1.500h11v15h-11z"/><path stroke="#ddd" stroke-width="1.500" stroke-dasharray="2 1 5 1" d="M5 5h8M5 9h8M5 13h8"/></svg></button><i></i>
      <button class="lockui" aria-label="锁定用户界面"><svg width="18" height="18"><path stroke="#ddd" fill="none" d="M9 13H1.500V2.500h12V8"/><path fill="#ddd" d="M8 11h7v6H8z"/><path stroke="#ddd" fill="none" d="M13.500 11V9h3v3"/></svg><span class="caret wide"></span></button><i></i>
      <button aria-label="隔离对象"><svg width="18" height="18"><path stroke="#ddd" fill="none" d="M1.500 1.500h6v6h-6zM9 11l3 6H6z"/><circle cx="14" cy="7" r="3" fill="none" stroke="#ddd"/></svg></button><i></i>
      <button class="on" aria-label="图形性能"><svg width="18" height="18"><circle cx="9" cy="9" r="7" fill="#7aa4c8" stroke="#c3cdd6" stroke-width="1.500"/><path stroke="#dde" d="M6 10l2 2 5-6"/></svg></button><i></i>
      <button aria-label="全屏显示"><svg width="18" height="18"><path stroke="#ddd" fill="none" d="M1.500 3.500h15v11h-15zM4 9v3h3M14 9V6h-3M4 12l3-3M14 6l-3 3"/></svg></button>
      <button aria-label="自定义"><svg width="18" height="18"><path stroke="#eee" stroke-width="2" d="M1 3h16M1 9h16M1 15h16"/></svg></button>
    </div>
  </footer>

  <svg class="arrows" width="1300" height="600">
    <defs><marker id="head" markerUnits="userSpaceOnUse" markerWidth="60" markerHeight="40" refX="25" refY="8" orient="auto" overflow="visible"><path fill="#f00" d="M27 8L0 0l5 8-5 8z"/></marker></defs>
    <g stroke="#f00" stroke-width="3">
      <path marker-end="url(#head)" d="M134 279L39 87"/><path marker-end="url(#head)" d="M416 235L501 132"/><path marker-end="url(#head)" d="M1220 241L1106 283"/>
      <path marker-end="url(#head)" d="M1180 447L1111 369"/><path marker-end="url(#head)" d="M394 392L472 363"/><path marker-end="url(#head)" d="M330 538L458 507"/>
    </g>
  </svg>
  <div class="ime">CH<svg width="12" height="12"><path fill="none" stroke="#222" d="M5 1c5 2 4 8-4 9 5 2 10 0 9-5C9 2 7 1 5 1z"/></svg>简</div>
  <div class="mark"><svg width="90" height="46"><path fill="none" stroke="#2c6da3" stroke-width="6" d="M36 28c8-10 18-16 30-16"/><path fill="none" stroke="#3f9a3f" stroke-width="7" d="M44 42c14-2 24-8 28-20"/><path fill="#a3abb5" d="M16 0h20l20 32H34zM62 0h-14C30 8 12 20 0 42 14 24 36 8 62 0z"/></svg><span>自由互联</span></div>
</div>
</body>
</html>
```
FILE: styles.css
```css
* { box-sizing: border-box; }
body { margin: 0; background: #e6eef4; font: 12px/16px "Noto Sans", "Noto Sans CJK SC", sans-serif; color: #e6e9ed; }
button { margin: 0; padding: 0; border: 0; background: none; color: inherit; font: inherit; white-space: nowrap; }
svg { display: block; flex: none; }
p, h2 { margin: 0; font: inherit; }
.app { position: relative; display: flex; flex-direction: column; height: 100vh; min-height: 700px; margin: 0 2px; overflow: hidden; background: #222831; border: 1px solid #1f8cc4; }

.caret { display: inline-block; flex: none; width: 0; height: 0; border: 3px solid transparent; border-top: 3px solid #d7dade; border-bottom: 0; }
.caret.wide { border-width: 4px 4px 0; }
.caret.dark { border-top-color: #666; border-width: 5px 4px 0; }

/* title bar */
.titlebar { display: grid; grid-template-columns: 1fr auto 1fr; align-items: center; height: 27px; flex: none; }
.quick { display: flex; align-items: center; padding-left: 9px; }
.quick > .caret.wide { margin: 0 14px 0 4px; }
.quick .q { width: 24px; display: grid; place-items: center; }
.quick .caret.tight { margin: 0 3px 0 2px; }
.custom { width: 20px; display: grid; justify-items: center; gap: 2px; }
.custom i { width: 8px; height: 2px; background: #ddd; }
.share { display: flex; align-items: center; gap: 4px; color: #6bb8ea; text-decoration: none; margin-left: 2px; }
.apptitle { display: flex; gap: 12px; font-size: 13px; color: #e0e3e7; margin-right: 214px; }
.account { display: flex; align-items: center; justify-content: flex-end; padding-right: 8px; }
.search { width: 179px; height: 21px; margin: 0 5px; padding: 0 3px; border: 0; background: #454d5e; color: #ddd; font: italic 11px/16px "Noto Sans", "Noto Sans CJK SC", sans-serif; }
.search::placeholder { color: #b9bec8; }
.login { display: flex; align-items: center; gap: 5px; margin: 0 60px 0 8px; }
.cart { margin-left: 9px; }
.apps { margin: 0 5px 0 8px; }
.vline { width: 1px; height: 20px; background: #555c66; margin: 0 9px; }
.help { width: 16px; height: 16px; border-radius: 8px; background: #ddd; color: #222831; font-weight: 700; margin-right: 6px; }
.win { display: flex; align-items: center; gap: 12px; margin-left: 69px; }

/* menus */
.menubar { display: flex; align-items: center; gap: 25px; height: 21px; flex: none; padding: 2px 6px 0 17px; border-bottom: 1px solid #3f4753; color: #c3c7ce; }
.docwin { margin-left: auto; display: flex; align-items: center; gap: 6px; }
.tabs { display: flex; align-items: flex-end; height: 24px; flex: none; padding-left: 7px; color: #c3c7ce; }
.tabs button { height: 20px; padding: 2px 10px 0; }
.tabs .on { background: #3b4453; color: #fff; padding: 2px 9px 0; }
.tabs .lat { font-size: 13px; padding-right: 0; }
.tabs .collapse { width: 16px; height: 8px; margin: 0 4px 5px 31px; padding: 0; background: #f3f3f3; display: grid; place-items: center; }
.collapse i { border: 3px solid transparent; border-bottom: 3px solid #444; border-top: 0; }
.tabs .caret { margin-bottom: 8px; }

/* ribbon */
.ribbon { display: flex; flex: none; margin: 0 1px 0 4px; background: #3b4453; }
.panel { display: flex; flex-direction: column; flex: none; border-right: 1px solid #272e38; padding-top: 6px; height: 99px; }
.panel:last-child { border: 0; }
.body { display: flex; height: 76px; }
.panel h2 { position: relative; display: flex; align-items: center; justify-content: center; gap: 6px; height: 16px; }
.launch { position: absolute; right: 4px; bottom: 4px; }
.inl { margin-left: 2px; }
.draw { width: 211px; padding-left: 2px; }
.modify { width: 227px; padding-left: 5px; }
.annot { width: 156px; padding-left: 1px; }
.layer { width: 252px; }
.block { width: 134px; }
.props { width: 244px; padding-left: 2px; }
.group { width: 67px; }
.util { width: 76px; }
.clip { width: 77px; }
.view { width: 64px; }
.big { display: flex; flex-direction: column; align-items: center; line-height: 17px; }
.big svg { margin-bottom: 2px; }
.big .caret { margin-top: 2px; }
.w36 { width: 36px; } .w40 { width: 40px; } .w42 { width: 42px; } .w44 { width: 44px; } .w48 { width: 48px; } .w52 { width: 52px; } .w60 { width: 60px; }
.w59 { width: 59px; } .w66 { width: 66px; } .w75 { width: 75px; }
.col { display: flex; flex-direction: column; }
.gap4 { margin-left: 4px; }
.row { display: flex; align-items: center; gap: 5px; height: 24px; padding-left: 2px; }
.row .caret { margin-left: 2px; }
.row .caret.far { margin-left: 6px; }
.icons .row { padding-left: 6px; gap: 5px; }
.block .col { padding-left: 1px; }
.util .row, .clip .row { padding-left: 2px; }
.group .row { width: 22px; height: 22px; margin: 1px 0; padding: 0; justify-content: center; }
.group .picked { background: #2c4f6e; outline: 1px solid #7cc8f7; }
.combo { display: flex; align-items: center; height: 22px; margin: 1px 0; background: #4d5a70; border: 1px solid #2a313c; }
.combo > .caret { margin: 0 1px 0 auto; }
.swatch { width: 14px; height: 14px; background: #fff; border: 1px solid #222; }
.layers { width: 208px; }
.layers .combo { padding-left: 3px; }
.layers .swatch { margin-right: 5px; margin-left: -9px; }
.lrow { display: flex; align-items: center; height: 24px; margin-left: -1px; }
.lrow button { width: 24px; display: grid; place-items: center; }
.pcombos { width: 181px; }
.pcombos .swatch { margin: 0 10px 0 12px; width: 16px; height: 16px; }
.pcombos .stroke { width: 64px; height: 1px; background: #fff; margin: 0 2px 0 3px; }

/* drawing tabs */
.files { display: flex; align-items: flex-end; height: 30px; flex: none; margin: 0 1px 0 4px; padding-left: 18px; border-bottom: 4px solid #3b4453; }
.ftab { display: flex; align-items: center; width: 125px; height: 22px; padding: 1px 0 0 13px; background: #2a313c; border-radius: 10px 10px 0 0; color: #b5bac3; }
.ftab.active { background: #3b4453; color: #fff; font-weight: 700; justify-content: space-between; padding: 1px 13px 0 11px; }
.fplus { width: 22px; height: 14px; margin: 0 0 4px 6px; background: #303845; border-radius: 3px 7px 7px 3px; display: grid; place-items: center; }

/* model space */
.canvas { position: relative; flex: 1; min-height: 0; }
.vplabel { position: absolute; left: 7px; top: 6px; color: #050709; }
.drawing { position: absolute; left: 0; top: 0; }
.dim { font: 10px "DejaVu Sans", sans-serif; fill: #fff; }
.prompt { position: absolute; left: 1101px; top: 113px; display: flex; gap: 2px; align-items: flex-start; color: #111; }
.tip { display: flex; align-items: flex-end; gap: 21px; height: 25px; padding: 0 3px 3px; border: 1px solid #000; background: #999; line-height: 20px; }
.coord { width: 74px; height: 22px; border: 1px solid #000; background: #999; padding: 1px 3px; }
.coord input { display: block; width: 100%; height: 18px; padding: 0; border: 0; background: none; color: #222; font: inherit; }
.coord.active { background: #fff; }
.coord.active input { width: 60px; background: #0a6fd0; color: #fff; }
.cube { position: absolute; right: 20px; top: 16px; width: 132px; height: 172px; font-size: 18px; line-height: 20px; color: #bfc2c6; }
.cube > span, .ring, .wcs { position: absolute; }
.ring { left: 6px; top: 6px; width: 120px; height: 120px; border: 13px solid #474c54; border-radius: 60px; display: grid; place-items: center; }
.face { width: 52px; height: 52px; background: #b3b4b6; border: 1px solid #ccc; display: grid; place-items: center; color: #434d5c; font-size: 28px; line-height: 30px; font-weight: 300; }
.face span { width: 32px; height: 32px; background: #b4bac6; }
.n { left: 57px; top: 0; } .s { left: 57px; top: 114px; } .w { left: 0; top: 57px; } .e { left: 113px; top: 57px; }
.wcs { left: 42px; top: 153px; width: 48px; height: 18px; border-radius: 4px; background: #9498a2; color: #4b505a; font-size: 11px; line-height: 16px; display: flex; align-items: center; justify-content: center; gap: 5px; }
.navbar { position: absolute; right: 7px; top: 212px; width: 32px; height: 212px; padding: 2px 4px; background: #5c6266; border-radius: 3px; display: flex; flex-direction: column; align-items: center; justify-content: space-between; }
.navbar .dot { align-self: flex-end; }
.navbar i { border: 2px solid transparent; border-top-color: #33383d; border-bottom: 0; }
.ucs { position: absolute; left: 16px; bottom: 15px; }
.ucs text { font: 300 19px "Noto Sans", sans-serif; fill: #fff; }

/* command line */
.command { position: absolute; left: 385px; right: 385px; bottom: 0; font: 13px/15px "Noto Sans CJK SC", sans-serif; }
.command b { font: 12px/15px "Liberation Mono", monospace; white-space: pre; }
.hist { display: flex; flex-direction: column; align-items: flex-start; gap: 5px; padding: 0 0 5px 62px; }
.hist p { height: 15px; padding: 0 2px; background: #5b5f62; border-radius: 2px; color: #eceef0; white-space: nowrap; }
.hist .old { background: #484c50; color: #b9bcc0; }
.cmd { display: flex; align-items: center; height: 26px; background: #2c333e; padding-left: 4px; border-radius: 4px 0 0 4px; }
.x { margin: 0 11px 0 5px; }
.line { flex: 1; min-width: 0; height: 25px; margin: 0 0 0 7px; padding: 0 4px; display: flex; align-items: center; background: #fff; color: #111; border-radius: 3px; white-space: nowrap; }
.line strong { font: 700 12px/15px "Liberation Mono", monospace; margin: 0 5px 0 6px; }
.line .caret { margin-left: 1px; }
.line button { padding: 0 1px; margin-right: 4px; height: 17px; line-height: 15px; background: #d6d6d6; border-radius: 3px; }
.line button:last-of-type { margin-right: 0; }
.line em { font-style: normal; color: #1414e0; }
.up { margin-left: auto; border: 4px solid transparent; border-top: 0; border-bottom-color: #666; }

/* status bar */
.status { display: flex; justify-content: space-between; flex: none; height: 28px; border-top: 1px solid #464d57; margin: 0 1px 0 3px; }
.layouts { display: flex; height: 17px; padding-left: 10px; gap: 2px; color: #b5bac3; }
.layouts button { width: 50px; background: #2a313c; border-radius: 2px 2px 10px 10px; line-height: 16px; }
.layouts .on { width: 48px; background: #3b4453; color: #fff; font-weight: 700; }
.layouts .add { width: 22px; margin-left: 6px; display: grid; place-items: center; }
.tools { display: flex; align-items: center; height: 24px; margin-top: 1px; padding-right: 5px; background: #343c4a; }
.tools > button { width: 24px; height: 22px; display: flex; align-items: center; justify-content: center; }
.tools > .on { background: #5488c4; border: solid #343c4a; border-width: 0 1px; }
.tools > .caret { margin: 0 4px; }
.tools > i { width: 1px; align-self: stretch; background: #222831; }
.tools > .gap { width: 3px; }
.tools > .xyz { width: 180px; height: 24px; justify-content: flex-end; padding-right: 5px; color: #c8ccd2; background: #3b4453; }
.tools > .model { width: 34px; font-weight: 700; border: solid #222831; border-width: 0 2px; height: 24px; }
.tools > .snap { width: 44px; align-items: flex-end; padding-bottom: 3px; }
.tools > .scale { width: 76px; gap: 5px; }
.tools > .gear { width: 43px; gap: 8px; }
.tools > .units { width: 96px; padding-left: 8px; justify-content: flex-start; gap: 12px; font-weight: 700; }
.units .caret { margin-left: auto; margin-right: 4px; }
.tools > .lockui { width: 46px; gap: 9px; }

/* layers over the window */
.arrows { position: absolute; left: -3px; top: -1px; pointer-events: none; filter: drop-shadow(2px 2px 1px rgba(0,0,0,.6)); }
.ime { position: absolute; left: 918px; bottom: 14px; width: 68px; height: 32px; border: 4px solid #000; border-radius: 6px; background: #fff; color: #333; display: flex; align-items: center; justify-content: center; gap: 3px; font-size: 13px; }
.mark { position: absolute; right: 14px; bottom: 14px; display: flex; opacity: .85; pointer-events: none; }
.mark span { margin-left: -28px; font: 900 30px/36px "Noto Sans CJK SC", sans-serif; color: #a3abb5; -webkit-text-stroke: 1px #a3abb5; }
```
